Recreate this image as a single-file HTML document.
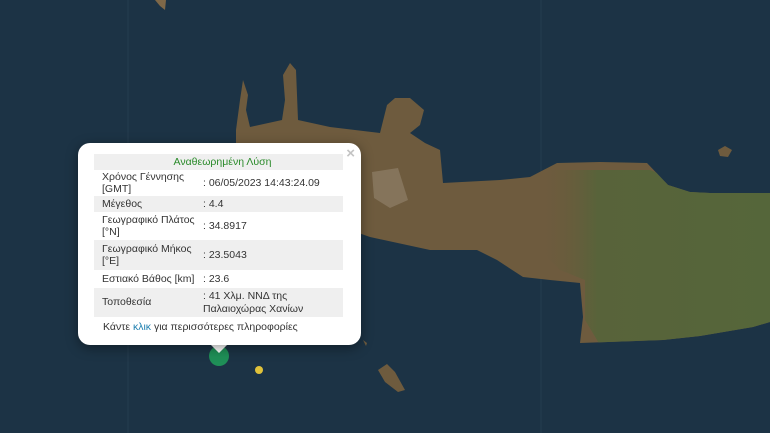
<!DOCTYPE html>
<html><head><meta charset="utf-8"><style>
html,body{margin:0;padding:0;width:770px;height:433px;overflow:hidden;background:#1c3345;font-family:"Liberation Sans",Arial,sans-serif}
svg{position:absolute;left:0;top:0}
.pop{position:absolute;left:78px;top:143px;width:283px;height:202px;background:#fff;border-radius:12px;box-shadow:0 3px 12px rgba(0,0,0,.4)}
.tip{position:absolute;left:210px;top:344px;width:0;height:0;border-left:9px solid transparent;border-right:9px solid transparent;border-top:9px solid #fff}
.x{position:absolute;right:6px;top:2px;color:#c3c3c3;font-size:15px;font-weight:bold}
table{position:absolute;left:16px;top:11px;width:249px;border-collapse:collapse;font-size:10.5px;color:#333}
td{padding:0 0 0 8px;line-height:12.5px;vertical-align:middle}
tr.g td{background:#efefef}
.h td{text-align:center;color:#2a8a2a;height:16px}
.f{position:absolute;left:25px;top:178px;font-size:10.5px;color:#333}
.f span{color:#2080b0}
</style></head><body>
<svg width="770" height="433">
<defs>
<linearGradient id="gr" x1="0" x2="1" y1="0" y2="0"><stop offset="0" stop-color="#6b5a3c" stop-opacity="0"/><stop offset=".25" stop-color="#58633a"/><stop offset="1" stop-color="#55663a"/></linearGradient>
<clipPath id="cl"><path id="land" d="M243 80 L248 95 L246 110 L250 127 L282 120 L285 100 L283 75 L290 63 L296 70 L298 120 L330 127 L380 133 L387 105 L395 98 L410 98 L424 110 L420 125 L410 133 L425 143 L440 150 L443 183 L500 180 L530 177 L557 163 L600 162 L647 163 L668 185 L690 192 L710 193 L770 193 L770 322 L753 327 L700 336 L663 340 L580 343 L583 317 L580 283 L550 280 L523 277 L497 260 L477 250 L430 250 L370 237 L350 230 L330 220 L320 200 L236 180 L236 130 L240 100Z"/></clipPath>
</defs>
<rect width="770" height="433" fill="#1c3345"/>
<line x1="128" y1="0" x2="128" y2="433" stroke="#2c4455" stroke-width=".6"/>
<line x1="541" y1="0" x2="541" y2="433" stroke="#2c4455" stroke-width=".6"/>
<path d="M155 0 L166 0 L165 10 L160 6Z" fill="#7e6848"/>
<use href="#land" fill="#6e5b3e"/>
<path clip-path="url(#cl)" d="M540 170 L650 170 L700 190 L770 190 L770 340 L700 340 L600 345 L585 320 L585 280 L560 270 L540 250Z" fill="url(#gr)"/>
<path d="M372 172 L398 168 L408 200 L390 208 L374 198Z" fill="#958670" opacity=".6"/>
<path d="M378 370 L387 364 L395 372 L405 390 L398 392 L385 382Z" fill="#6e5b3e"/>
<path d="M718 150 L725 146 L732 150 L728 157 L720 156Z" fill="#6e5b3e"/>
<path d="M363 340 L367 343 L366 346Z" fill="#6e5b3e"/>
<circle cx="219" cy="356" r="10" fill="#1f8f57"/>
<circle cx="259" cy="370" r="4" fill="#e0c23a"/>
</svg>
<div class="tip"></div>
<div class="pop">
<div class="x">×</div>
<table>
<tr class="g h"><td colspan="2">Αναθεωρημένη Λύση</td></tr>
<tr><td style="height:26px;width:93px">Χρόνος Γέννησης<br>[GMT]</td><td>: 06/05/2023 14:43:24.09</td></tr>
<tr class="g"><td style="height:16px">Μέγεθος</td><td>: 4.4</td></tr>
<tr><td style="height:28px">Γεωγραφικό Πλάτος<br>[°N]</td><td>: 34.8917</td></tr>
<tr class="g"><td style="height:30px">Γεωγραφικό Μήκος<br>[°E]</td><td>: 23.5043</td></tr>
<tr><td style="height:18px">Εστιακό Βάθος [km]</td><td>: 23.6</td></tr>
<tr class="g"><td style="height:29px">Τοποθεσία</td><td>: 41 Χλμ. ΝΝΔ της<br>Παλαιοχώρας Χανίων</td></tr>
</table>
<div class="f">Κάντε <span>κλικ</span> για περισσότερες πληροφορίες</div>
</div>
</body></html>
